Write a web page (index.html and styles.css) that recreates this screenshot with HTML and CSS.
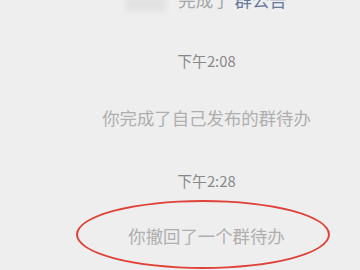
FILE: index.html
```html
<!DOCTYPE html>
<html lang="zh">
<head>
<meta charset="utf-8">
<link rel="stylesheet" href="styles.css">
</head>
<body>
<div class="chat">
  <div class="sys top"><span class="blur"></span><span class="gray">完成了</span><span class="link">群公告</span></div>
  <div class="time t1">下午2:08</div>
  <div class="sys msg1">你完成了自己发布的群待办</div>
  <div class="time t2">下午2:28</div>
  <div class="sys msg2">你撤回了一个群待办<span class="ring"></span></div>
</div>
</body>
</html>
```
FILE: styles.css
```css
html, body {
  margin: 0;
  padding: 0;
  background: #eeeeee;
  width: 360px;
  height: 270px;
  overflow: hidden;
}
.chat {
  display: flex;
  flex-direction: column;
  align-items: center;
  padding-left: 53px;
  font-family: "Noto Sans CJK SC", "Noto Sans", sans-serif;
}
.sys {
  font-size: 17.4px;
  line-height: 24px;
  color: #afafaf;
  white-space: nowrap;
}
.top {
  display: flex;
  align-items: center;
  margin-top: -12px;
  line-height: 24px;
}
.blur {
  display: inline-block;
  width: 40px;
  height: 13px;
  margin-top: 8px;
  margin-right: 12px;
  background: #e2e2e2;
  filter: blur(2px);
}
.gray { color: #a6a6a6; margin-right: 4px; }
.link { color: #67789c; }
.time {
  font-size: 14.8px;
  line-height: 20px;
  color: #888888;
}
.t1 { margin-top: 39px; }
.msg1 { margin-top: 35px; }
.t2 { margin-top: 41px; }
.msg2 { margin-top: 33px; position: relative; }
.ring {
  position: absolute;
  left: -52px;
  top: -24px;
  width: 250px;
  height: 65px;
  border: 2.5px solid #df4238;
  border-radius: 50%;
}
```
